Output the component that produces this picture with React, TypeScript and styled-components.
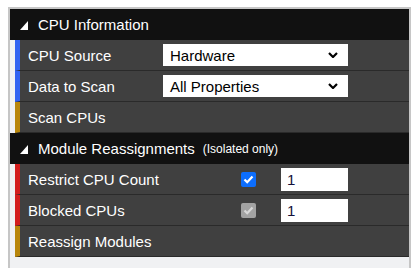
import React from "react";
import styled, { createGlobalStyle } from "styled-components";

const Global = createGlobalStyle`
  html, body { margin: 0; padding: 0; background: #ffffff; }
  body { font-family: "Liberation Sans", Arial, sans-serif; }
`;

const Panel = styled.div`
  margin: 7px 0 0 8px;
  width: 399px;
  height: 270px;
  border: 2px solid #c6c6c6;
  border-bottom: none;
  background: #f0f1f3;
  display: flex;
  flex-direction: column;
`;

const Header = styled.div`
  height: 31px;
  background: #111111;
  color: #ffffff;
  display: flex;
  align-items: center;
  padding-left: 10px;
  font-size: 15px;
  box-sizing: border-box;
`;

const Caret = styled.svg`
  width: 8px;
  height: 9px;
  margin-right: 10px;
  margin-top: 1px;
  flex: none;
`;

const Note = styled.span`
  font-size: 12px;
  margin-left: 8px;
  margin-top: 1px;
`;

const Row = styled.div<{ $accent: string }>`
  margin-left: 5px;
  height: 31px;
  box-sizing: border-box;
  background: #404040;
  border-left: 5px solid ${(p) => p.$accent};
  border-bottom: 1px solid #2a2a2a;
  display: grid;
  grid-template-columns: 143px 118px 67px 1fr;
  align-items: center;
  color: #ffffff;
  font-size: 15px;
`;

const Label = styled.div`
  padding-left: 8px;
`;

const SelectBox = styled.div`
  grid-column: 2 / span 2;
  height: 22px;
  background: #ffffff;
  color: #000000;
  display: flex;
  align-items: center;
  justify-content: space-between;
  padding: 0 10px 0 7px;
  font-size: 15px;
`;

const Chevron = styled.svg`
  width: 10px;
  height: 6px;
`;

const CheckCell = styled.div`
  display: flex;
  justify-content: flex-end;
  padding-right: 25px;
`;

const Check = styled.div<{ $disabled?: boolean }>`
  width: 15px;
  height: 15px;
  border-radius: 2px;
  background: ${(p) => (p.$disabled ? "#a3a3a3" : "#0d6efd")};
  display: flex;
  align-items: center;
  justify-content: center;
`;

const NumberBox = styled.div`
  height: 23px;
  background: #ffffff;
  color: #14103a;
  display: flex;
  align-items: center;
  padding-left: 6px;
  font-size: 15px;
`;

const Tri = () => (
  <Caret viewBox="0 0 8 9">
    <polygon points="8,0 8,9 0,9" fill="#ffffff" />
  </Caret>
);

const Chev = () => (
  <Chevron viewBox="0 0 10 6">
    <polyline points="1,1 5,5 9,1" fill="none" stroke="#000" strokeWidth="2.2" />
  </Chevron>
);

const Tick = ({ color }: { color: string }) => (
  <svg width="11" height="9" viewBox="0 0 11 9">
    <polyline points="1.5,4.5 4.2,7.2 9.5,1.5" fill="none" stroke={color} strokeWidth="2.2" />
  </svg>
);

const BLUE = "#3163f2";
const GOLD = "#b8860b";
const RED = "#d31d1d";

export default function App() {
  return (
    <>
      <Global />
      <Panel>
        <Header>
          <Tri />
          CPU Information
        </Header>
        <Row $accent={BLUE}>
          <Label>CPU Source</Label>
          <SelectBox>
            Hardware
            <Chev />
          </SelectBox>
        </Row>
        <Row $accent={BLUE}>
          <Label>Data to Scan</Label>
          <SelectBox>
            All Properties
            <Chev />
          </SelectBox>
        </Row>
        <Row $accent={GOLD}>
          <Label>Scan CPUs</Label>
        </Row>
        <Header>
          <Tri />
          Module Reassignments
          <Note>(Isolated only)</Note>
        </Header>
        <Row $accent={RED}>
          <Label>Restrict CPU Count</Label>
          <CheckCell>
            <Check>
              <Tick color="#ffffff" />
            </Check>
          </CheckCell>
          <NumberBox>1</NumberBox>
        </Row>
        <Row $accent={RED}>
          <Label>Blocked CPUs</Label>
          <CheckCell>
            <Check $disabled>
              <Tick color="#d8d8d8" />
            </Check>
          </CheckCell>
          <NumberBox>1</NumberBox>
        </Row>
        <Row $accent={GOLD}>
          <Label>Reassign Modules</Label>
        </Row>
      </Panel>
    </>
  );
}
